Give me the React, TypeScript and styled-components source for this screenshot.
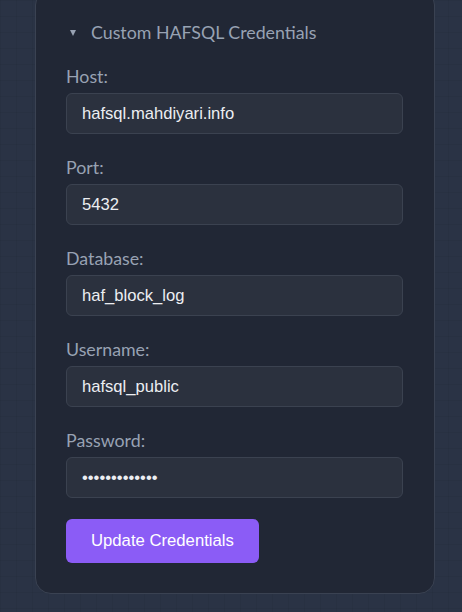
import React from "react";
import styled, { createGlobalStyle } from "styled-components";

const Global = createGlobalStyle`
  html, body { margin: 0; padding: 0; }
  body {
    background-color: #2a3345;
    background-image:
      linear-gradient(rgba(0,0,0,0.045) 1px, transparent 1px),
      linear-gradient(90deg, rgba(0,0,0,0.045) 1px, transparent 1px);
    background-size: 16px 16px;
    min-height: 612px;
    overflow: hidden;
  }
`;

const Page = styled.div`
  padding: 0 27px 0 35px;
  height: 612px;
  box-sizing: border-box;
`;

const Card = styled.div`
  margin-top: -11px;
  width: 400px;
  box-sizing: border-box;
  background: #212735;
  border: 1px solid #3a4252;
  border-radius: 16px;
  padding: 30px 31px 30px 30px;
`;

const Details = styled.div`
  display: flex;
  flex-direction: column;
`;

const Summary = styled.div`
  display: flex;
  align-items: center;
  height: 24px;
  margin-bottom: 20px;
  font-family: Lato, "Noto Sans", sans-serif;
  font-size: 17.8px;
  color: #98a2b3;
`;

const Marker = styled.span`
  width: 0;
  height: 0;
  border-left: 3.5px solid transparent;
  border-right: 3.5px solid transparent;
  border-top: 6px solid #98a2b3;
  margin: 1px 15px 0 4px;
`;

const Field = styled.div`
  display: flex;
  flex-direction: column;
  margin-bottom: 21px;
`;

const Label = styled.label`
  font-family: Lato, "Noto Sans", sans-serif;
  font-size: 17.8px;
  line-height: 24px;
  color: #98a2b3;
  margin-bottom: 5px;
`;

const Input = styled.input`
  box-sizing: border-box;
  height: 41px;
  width: 100%;
  background: #2b313e;
  border: 1px solid #3b4250;
  border-radius: 6px;
  padding: 0 15px;
  font-family: "Liberation Sans", Arial, sans-serif;
  font-size: 16.6px;
  color: #eceef2;
  outline: none;
`;

const Button = styled.button`
  align-self: flex-start;
  height: 44px;
  padding: 0 25px;
  background: #8b5cf6;
  border: none;
  border-radius: 6px;
  color: #ffffff;
  font-family: "Liberation Sans", Arial, sans-serif;
  font-size: 16.7px;
  cursor: pointer;
`;

const fields = [
  { label: "Host:", value: "hafsql.mahdiyari.info", type: "text" },
  { label: "Port:", value: "5432", type: "text" },
  { label: "Database:", value: "haf_block_log", type: "text" },
  { label: "Username:", value: "hafsql_public", type: "text" },
  { label: "Password:", value: "hafsql_public", type: "password" },
];

export default function App() {
  return (
    <>
      <Global />
      <Page>
        <Card>
          <Details>
            <Summary>
              <Marker />
              Custom HAFSQL Credentials
            </Summary>
            {fields.map((f) => (
              <Field key={f.label}>
                <Label>{f.label}</Label>
                <Input type={f.type} defaultValue={f.value} />
              </Field>
            ))}
            <Button>Update Credentials</Button>
          </Details>
        </Card>
      </Page>
    </>
  );
}
